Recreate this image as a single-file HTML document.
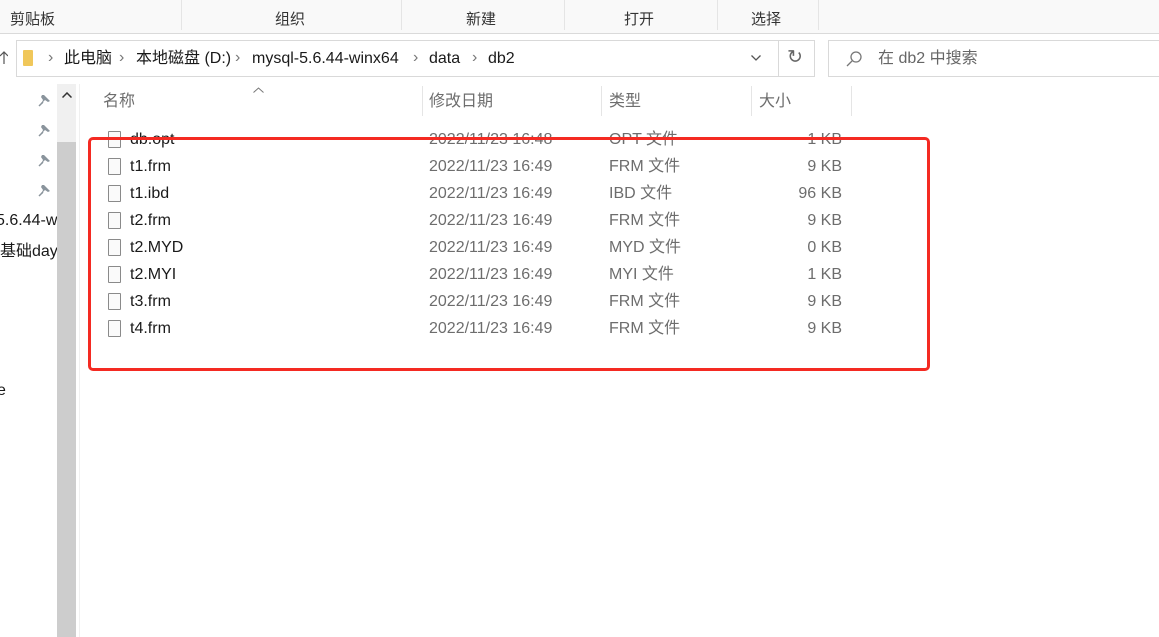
<!DOCTYPE html>
<html><head><meta charset="utf-8"><style>
*{margin:0;padding:0;box-sizing:border-box}
body{width:1159px;height:637px;overflow:hidden;background:#fff;font-family:"Liberation Sans","Noto Sans CJK SC",sans-serif;font-size:16px;color:#1a1a1a;position:relative}
.a{position:absolute;white-space:nowrap;line-height:20px}
.g{color:#6d6d6d}
.sep{position:absolute;width:1px;background:#e5e5e5}
.fi{position:absolute;width:13px;height:17px;border:1px solid #8a8a8a;background:#fafafa;border-radius:1px}
.pin{position:absolute}
</style></head><body>
<div class="a" style="left:0;top:0;width:1159px;height:34px;background:#f9f9f9;border-bottom:1px solid #dadada"></div>
<div class="sep" style="left:181px;top:0;height:30px"></div>
<div class="sep" style="left:401px;top:0;height:30px"></div>
<div class="sep" style="left:564px;top:0;height:30px"></div>
<div class="sep" style="left:717px;top:0;height:30px"></div>
<div class="sep" style="left:818px;top:0;height:30px"></div>
<div class="a" style="left:10px;top:10px;font-size:15px;color:#333">剪贴板</div>
<div class="a" style="left:275px;top:10px;font-size:15px;color:#333">组织</div>
<div class="a" style="left:466px;top:10px;font-size:15px;color:#333">新建</div>
<div class="a" style="left:624px;top:10px;font-size:15px;color:#333">打开</div>
<div class="a" style="left:751px;top:10px;font-size:15px;color:#333">选择</div>
<svg class="pin" style="left:0;top:51px" width="8" height="14"><path d="M4 1V13M0 5L4 1L8 5" fill="none" stroke="#555" stroke-width="1.2"/></svg>
<div class="a" style="left:16px;top:40px;width:763px;height:37px;border:1px solid #d9d9d9"></div>
<div class="a" style="left:23px;top:50px;width:10px;height:16px;background:#f0c75a;border-radius:1px"></div>
<div class="a" style="left:48px;top:48px;color:#777">›</div>
<div class="a" style="left:64px;top:49px">此电脑</div>
<div class="a" style="left:119px;top:48px;color:#777">›</div>
<div class="a" style="left:136px;top:49px">本地磁盘 (D:)</div>
<div class="a" style="left:235px;top:48px;color:#777">›</div>
<div class="a" style="left:252px;top:49px">mysql-5.6.44-winx64</div>
<div class="a" style="left:413px;top:48px;color:#777">›</div>
<div class="a" style="left:429px;top:49px">data</div>
<div class="a" style="left:472px;top:48px;color:#777">›</div>
<div class="a" style="left:488px;top:49px">db2</div>
<svg class="pin" style="left:751px;top:55px" width="10" height="6"><path d="M0.5 0.5L5 5L9.5 0.5" fill="none" stroke="#555" stroke-width="1.3"/></svg>
<div class="a" style="left:778px;top:40px;width:37px;height:37px;border:1px solid #d9d9d9"></div>
<div class="a" style="left:787px;top:48px;font-size:19px;color:#666">↻</div>
<div class="a" style="left:828px;top:40px;width:340px;height:37px;border:1px solid #d9d9d9"></div>
<svg class="pin" style="left:845px;top:50px" width="18" height="18"><circle cx="11" cy="7" r="5" fill="none" stroke="#777" stroke-width="1.3"/><line x1="7" y1="11" x2="2" y2="16" stroke="#777" stroke-width="1.3"/></svg>
<div class="a" style="left:878px;top:49px;color:#666">在 db2 中搜索</div>
<div class="a" style="left:57px;top:84px;width:19px;height:553px;background:#f0f0f0"></div>
<div class="a" style="left:57px;top:142px;width:19px;height:495px;background:#cdcdcd"></div>
<svg class="pin" style="left:62px;top:92px" width="10" height="6"><path d="M0.5 5.5L5 1L9.5 5.5" fill="none" stroke="#333" stroke-width="1.5"/></svg>
<div class="a" style="left:79px;top:84px;width:1px;height:553px;background:#f0f0f0"></div>
<svg class="pin" style="left:38px;top:93px" width="14" height="14"><path d="M6 2L12 8L10 9L7 7L5 9L5 10L4 11L3 10L4 9L5 7L3 4L4 2Z" fill="#8a949c"/><line x1="5" y1="9" x2="1" y2="13" stroke="#8a949c" stroke-width="1.5"/></svg>
<svg class="pin" style="left:38px;top:123px" width="14" height="14"><path d="M6 2L12 8L10 9L7 7L5 9L5 10L4 11L3 10L4 9L5 7L3 4L4 2Z" fill="#8a949c"/><line x1="5" y1="9" x2="1" y2="13" stroke="#8a949c" stroke-width="1.5"/></svg>
<svg class="pin" style="left:38px;top:153px" width="14" height="14"><path d="M6 2L12 8L10 9L7 7L5 9L5 10L4 11L3 10L4 9L5 7L3 4L4 2Z" fill="#8a949c"/><line x1="5" y1="9" x2="1" y2="13" stroke="#8a949c" stroke-width="1.5"/></svg>
<svg class="pin" style="left:38px;top:183px" width="14" height="14"><path d="M6 2L12 8L10 9L7 7L5 9L5 10L4 11L3 10L4 9L5 7L3 4L4 2Z" fill="#8a949c"/><line x1="5" y1="9" x2="1" y2="13" stroke="#8a949c" stroke-width="1.5"/></svg>
<div class="a" style="left:-4px;top:211px;width:61px;overflow:hidden">5.6.44-winx</div>
<div class="a" style="left:0;top:242px;width:57px;overflow:hidden">基础day</div>
<div class="a" style="left:-3px;top:381px">e</div>
<svg class="pin" style="left:253px;top:87px" width="11" height="6"><path d="M0.5 5.5L5.5 1L10.5 5.5" fill="none" stroke="#777" stroke-width="1"/></svg>
<div class="a g" style="left:103px;top:92px">名称</div>
<div class="a g" style="left:429px;top:92px">修改日期</div>
<div class="a g" style="left:609px;top:92px">类型</div>
<div class="a g" style="left:759px;top:92px">大小</div>
<div class="sep" style="left:422px;top:86px;height:30px"></div>
<div class="sep" style="left:601px;top:86px;height:30px"></div>
<div class="sep" style="left:751px;top:86px;height:30px"></div>
<div class="sep" style="left:851px;top:86px;height:30px"></div>
<div class="fi" style="left:108px;top:131px"></div><div class="a" style="left:130px;top:130px">db.opt</div><div class="a g" style="left:429px;top:130px">2022/11/23 16:48</div><div class="a g" style="left:609px;top:130px">OPT 文件</div><div class="a g" style="left:742px;top:130px;width:100px;text-align:right">1 KB</div>
<div class="fi" style="left:108px;top:158px"></div><div class="a" style="left:130px;top:157px">t1.frm</div><div class="a g" style="left:429px;top:157px">2022/11/23 16:49</div><div class="a g" style="left:609px;top:157px">FRM 文件</div><div class="a g" style="left:742px;top:157px;width:100px;text-align:right">9 KB</div>
<div class="fi" style="left:108px;top:185px"></div><div class="a" style="left:130px;top:184px">t1.ibd</div><div class="a g" style="left:429px;top:184px">2022/11/23 16:49</div><div class="a g" style="left:609px;top:184px">IBD 文件</div><div class="a g" style="left:742px;top:184px;width:100px;text-align:right">96 KB</div>
<div class="fi" style="left:108px;top:212px"></div><div class="a" style="left:130px;top:211px">t2.frm</div><div class="a g" style="left:429px;top:211px">2022/11/23 16:49</div><div class="a g" style="left:609px;top:211px">FRM 文件</div><div class="a g" style="left:742px;top:211px;width:100px;text-align:right">9 KB</div>
<div class="fi" style="left:108px;top:239px"></div><div class="a" style="left:130px;top:238px">t2.MYD</div><div class="a g" style="left:429px;top:238px">2022/11/23 16:49</div><div class="a g" style="left:609px;top:238px">MYD 文件</div><div class="a g" style="left:742px;top:238px;width:100px;text-align:right">0 KB</div>
<div class="fi" style="left:108px;top:266px"></div><div class="a" style="left:130px;top:265px">t2.MYI</div><div class="a g" style="left:429px;top:265px">2022/11/23 16:49</div><div class="a g" style="left:609px;top:265px">MYI 文件</div><div class="a g" style="left:742px;top:265px;width:100px;text-align:right">1 KB</div>
<div class="fi" style="left:108px;top:293px"></div><div class="a" style="left:130px;top:292px">t3.frm</div><div class="a g" style="left:429px;top:292px">2022/11/23 16:49</div><div class="a g" style="left:609px;top:292px">FRM 文件</div><div class="a g" style="left:742px;top:292px;width:100px;text-align:right">9 KB</div>
<div class="fi" style="left:108px;top:320px"></div><div class="a" style="left:130px;top:319px">t4.frm</div><div class="a g" style="left:429px;top:319px">2022/11/23 16:49</div><div class="a g" style="left:609px;top:319px">FRM 文件</div><div class="a g" style="left:742px;top:319px;width:100px;text-align:right">9 KB</div>
<div class="a" style="left:88px;top:137px;width:842px;height:234px;border:3.5px solid #f42a22;border-radius:5px"></div>
</body></html>
